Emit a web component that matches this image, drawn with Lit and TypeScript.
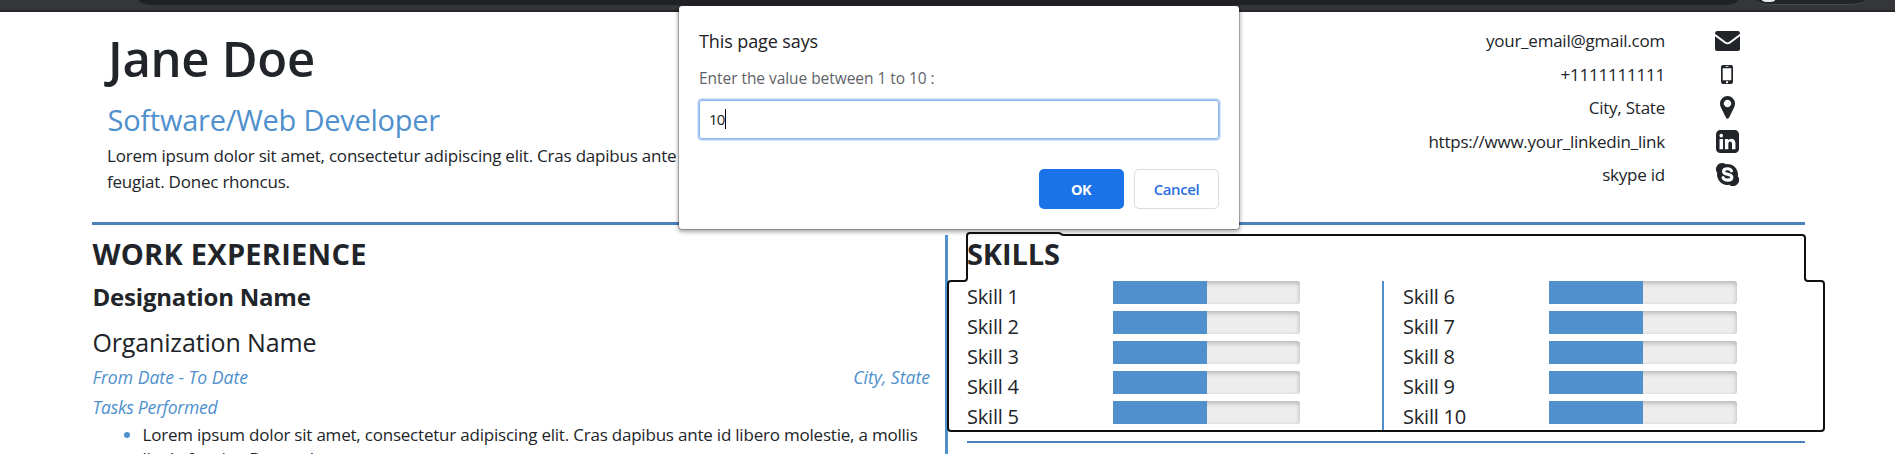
import {LitElement, html, css} from "lit";
import {customElement, property} from "lit/decorators.js";

@customElement("skill-row")
class SkillRow extends LitElement {
  @property() name = "";
  @property({type: Number}) value = 50;
  static styles = css`
    :host{display:grid;grid-template-columns:146px 1fr;height:30px}
    .name{font-size:20px;line-height:30px;letter-spacing:-.2px;padding-top:1px;white-space:nowrap}
    .track{height:23px;width:var(--track, 187px);background:#ededed;border-radius:0 3px 3px 0;overflow:hidden;box-shadow:inset 0 2px 5px rgba(0,0,0,.25)}
    .fill{height:100%;background:#4f90cd}
  `;
  render() {
    return html`<span class="name">${this.name}</span>
      <div class="track"><div class="fill" style="width:${this.value}%"></div></div>`;
  }
}

@customElement("prompt-dialog")
class PromptDialog extends LitElement {
  static styles = css`
    :host{position:absolute;left:679px;top:6px;width:560px;height:223px;box-sizing:border-box;padding:20px 20px 20px;background:#fff;border-radius:3px;box-shadow:0 0 0 1px rgba(0,0,0,.22),0 2px 4px 1px rgba(0,0,0,.34);display:flex;flex-direction:column}
    .title{font-size:18px;line-height:30px;letter-spacing:-.1px;color:#202124}
    .msg{font-size:15.500px;line-height:24px;letter-spacing:-.05px;margin-top:10px;color:#5f6368}
    .field{box-sizing:border-box;height:39px;margin:10px 0 0;border:1px solid #8fb4ea;border-radius:3px;box-shadow:0 0 0 1.500px #a9c9f5;display:flex;align-items:center;padding:0 0 2px 9px;font-size:15px;letter-spacing:-.8px;color:#202124}
    .caret{width:1px;height:20px;margin-left:.5px;background:#000}
    .actions{display:flex;justify-content:flex-end;gap:10px;margin-top:30px}
    .btn{box-sizing:border-box;width:85px;height:40px;border-radius:5px;display:flex;align-items:center;justify-content:center;font-size:15px;font-weight:600}
    .ok{background:#1a73e8;color:#fff;font-weight:700;font-size:14.500px;letter-spacing:-.5px;padding-right:1px}
    .cancel{border:1px solid #dadce0;color:#2a6fe0;letter-spacing:-.4px}
  `;
  render() {
    return html`<div class="title">This page says</div>
      <div class="msg">Enter the value between 1 to 10 :</div>
      <div class="field">10<span class="caret"></span></div>
      <div class="actions"><div class="btn ok">OK</div><div class="btn cancel">Cancel</div></div>`;
  }
}

const icons = {
  mail: html`<svg width="25" height="20" viewBox="0 0 25 20"><path d="M2.5 0h20A2.4 2.4 0 0 1 25 2.2v.6L14.300 10.800q-1.800 1.300-3.600 0L0 2.800v-.6A2.400 2.400 0 0 1 2.500 0z"/><path d="M0 5.300l9.500 6.900q3 2 6 0L25 5.300v12.200a2.400 2.400 0 0 1-2.500 2.500h-20A2.400 2.400 0 0 1 0 17.500z"/></svg>`,
  mobile: html`<svg width="12" height="19" viewBox="0 0 12 19"><path fill-rule="evenodd" d="M2 0h8a2 2 0 0 1 2 2v15a2 2 0 0 1-2 2H2a2 2 0 0 1-2-2V2a2 2 0 0 1 2-2zM1.700 3.300v11.900h8.600V3.300zM4.500 1.300v.8h3v-.8zM6 16a1.100 1.100 0 1 0 .01 0z"/></svg>`,
  pin: html`<svg width="15" height="23" viewBox="0 0 15 23"><path fill-rule="evenodd" d="M7.500 0A7.500 7.500 0 0 1 15 7.500c0 1.300-.2 2.400-.7 3.400L9 21.700q-1.500 2-3 0L.7 10.900C.2 9.900 0 8.800 0 7.500A7.500 7.500 0 0 1 7.500 0zM7.500 3.800a3.700 3.700 0 1 0 .01 0z"/></svg>`,
  linkedin: html`<svg width="23" height="23" viewBox="0 0 24 24"><path fill-rule="evenodd" d="M4.500 0h15A4.500 4.500 0 0 1 24 4.500v15a4.500 4.500 0 0 1-4.500 4.500h-15A4.500 4.500 0 0 1 0 19.500v-15A4.500 4.500 0 0 1 4.500 0zM3.700 9.300V20.100h3.600V9.300zM5.500 4A1.900 1.900 0 1 0 5.500 7.800 1.900 1.900 0 1 0 5.500 4zM9.300 9.300V20.100h3.600v-6c0-1.300.8-2.200 1.900-2.200 1.300 0 1.900 1 1.900 2.500v5.700h3.600v-6.200c0-3.300-1.800-4.900-4.200-4.900-1.900 0-2.700 1.100-3.200 1.800V9.300z"/></svg>`,
  skype: html`<svg width="23" height="23" viewBox="0 0 24 24"><path d="M6.500 0c1.400 0 2.700.5 3.800 1.200a11 11 0 0 1 12.500 12.500A6.500 6.500 0 0 1 13.700 22.800 11 11 0 0 1 1.200 10.300 6.500 6.500 0 0 1 6.500 0z"/><path fill="none" stroke="#fff" stroke-width="3.300" stroke-linecap="round" d="M16.100 8.200C15.300 6.500 13.700 6 12 6c-2.300 0-4.100.9-4.100 2.800 0 4 8.600 2 8.600 6 0 2-2 3.100-4.400 3.100-2.200 0-4-.8-4.700-2.500"/></svg>`,
};

@customElement("app-root")
class AppRoot extends LitElement {
  static styles = css`
    :host{display:block;position:relative;height:454px;overflow:hidden;background:#fff;color:#212529;font-family:"Open Sans","Noto Sans",sans-serif;font-size:17px}
    .chrome{height:12px;box-sizing:border-box;background:#35363a;border-bottom:2px solid #28262a;display:flex;padding-left:139px}
    .omni{width:1599px;height:5px;background:#202124;border-radius:0 0 14px 14px / 0 0 5px 5px}
    .profile{width:109px;height:5px;margin-left:18px;background:#242528;border-bottom:1px solid #4a4b4f;box-sizing:border-box;border-radius:0 0 16px 16px / 0 0 5px 5px;padding-left:6px}
    .dot{width:13px;height:2px;background:#e8eaed;border-radius:0 0 7px 7px / 0 0 2px 2px}
    .page{width:1713px;margin-left:92px}
    .head{height:210px;box-sizing:border-box;display:flex;justify-content:space-between;padding:12px 65px 0 15px}
    .intro{width:1060px;padding-top:4px}
    .name{font-size:49px;font-weight:600;line-height:60px;white-space:nowrap;letter-spacing:-.3px;padding-left:1px}
    .role{font-size:29px;line-height:36px;letter-spacing:-.25px;margin-top:14px;padding-left:.5px;color:#4f90cd}
    .body{line-height:26.400px;letter-spacing:-.22px;margin-top:5px}
    .contacts{display:grid;grid-template-columns:auto 26px;column-gap:49px;grid-auto-rows:33.400px;padding-top:.4px}
    .contact{text-align:right;line-height:33.400px;letter-spacing:-.23px}
    .icon{display:flex;align-items:center;justify-content:center;fill:#212529;padding-bottom:0}
    .rule{height:3px;background:#4a82bd}
    .cols{display:flex;padding-top:10px}
    .work{width:838px;box-sizing:border-box;padding-left:.5px;height:220px}
    .h{font-size:29px;font-weight:700;line-height:36px;padding-top:1px;letter-spacing:.25px}
    .side .h{letter-spacing:-.1px}
    .desig{font-size:24px;font-weight:700;line-height:34px;letter-spacing:-.2px;margin-top:8px}
    .org{font-size:25px;line-height:34px;letter-spacing:-.15px;margin-top:11px}
    .meta{display:flex;justify-content:space-between;font-style:italic;font-size:17.600px;line-height:30px;color:#4f90cd}
    .org + .meta{padding-top:2.500px}
    .tight{letter-spacing:-.3px}
    .list{margin:0;padding:1px 0 0 50px;line-height:24px;letter-spacing:-.21px}
    .list li::marker{color:#4f90cd}
    .side{width:860px;border-left:3px solid #4f90cd;padding-left:19px;height:220px;margin-left:15px;box-sizing:border-box}
    .grid{display:grid;grid-template-columns:415px 1fr;margin-top:9px;height:149px}
    .right{border-left:2px solid #4f90cd;padding-left:19px;height:149px;--track:188px}
    .left{height:149px}
    .rule2{height:2px;background:#4a82bd;margin-top:11px}
    .focus{position:absolute;left:940px;top:225px;pointer-events:none}
  `;
  private contacts: [keyof typeof icons, string][] = [
    ["mail", "your_email@gmail.com"], ["mobile", "+1111111111"], ["pin", "City, State"],
    ["linkedin", "https://www.your_linkedin_link"], ["skype", "skype id"],
  ];
  render() {
    return html`
      <div class="chrome"><div class="omni"></div><div class="profile"><div class="dot"></div></div></div>
      <div class="page">
        <div class="head">
          <div class="intro">
            <div class="name">Jane Doe</div>
            <div class="role">Software/Web Developer</div>
            <div class="body">Lorem ipsum dolor sit amet, consectetur adipiscing elit. Cras dapibus ante id libero molestie, a mollis ligula<br>feugiat. Donec rhoncus.</div>
          </div>
          <div class="contacts">${this.contacts.map(([i, t]) => html`<div class="contact">${t}</div><div class="icon">${icons[i]}</div>`)}</div>
        </div>
        <div class="rule"></div>
        <div class="cols">
          <div class="work">
            <div class="h">WORK EXPERIENCE</div>
            <div class="desig">Designation Name</div>
            <div class="org">Organization Name</div>
            <div class="meta"><span>From Date - To Date</span><span>City, State</span></div>
            <div class="meta tight">Tasks Performed</div>
            <ul class="list"><li>Lorem ipsum dolor sit amet, consectetur adipiscing elit. Cras dapibus ante id libero molestie, a mollis<br>ligula feugiat. Donec rhoncus.</li></ul>
          </div>
          <div class="side">
            <div class="h">SKILLS</div>
            <div class="grid">
              <div class="left">${[1, 2, 3, 4, 5].map(n => html`<skill-row name="Skill ${n}"></skill-row>`)}</div>
              <div class="right">${[6, 7, 8, 9, 10].map(n => html`<skill-row name="Skill ${n}"></skill-row>`)}</div>
            </div>
            <div class="rule2"></div>
          </div>
        </div>
      </div>
      <svg class="focus" width="890" height="212" viewBox="940 225 890 212" fill="none" stroke="#101010" stroke-width="2">
        <path d="M970 233H1058Q1060 233 1061 234Q1062 235 1064 235H1802Q1805 235 1805 238V278Q1805 281 1808 281H1821Q1824 281 1824 284V428Q1824 431 1821 431H951Q948 431 948 428V284Q948 281 951 281H964Q967 281 967 278V236Q967 233 970 233Z"/>
      </svg>
      <prompt-dialog></prompt-dialog>`;
  }
}
